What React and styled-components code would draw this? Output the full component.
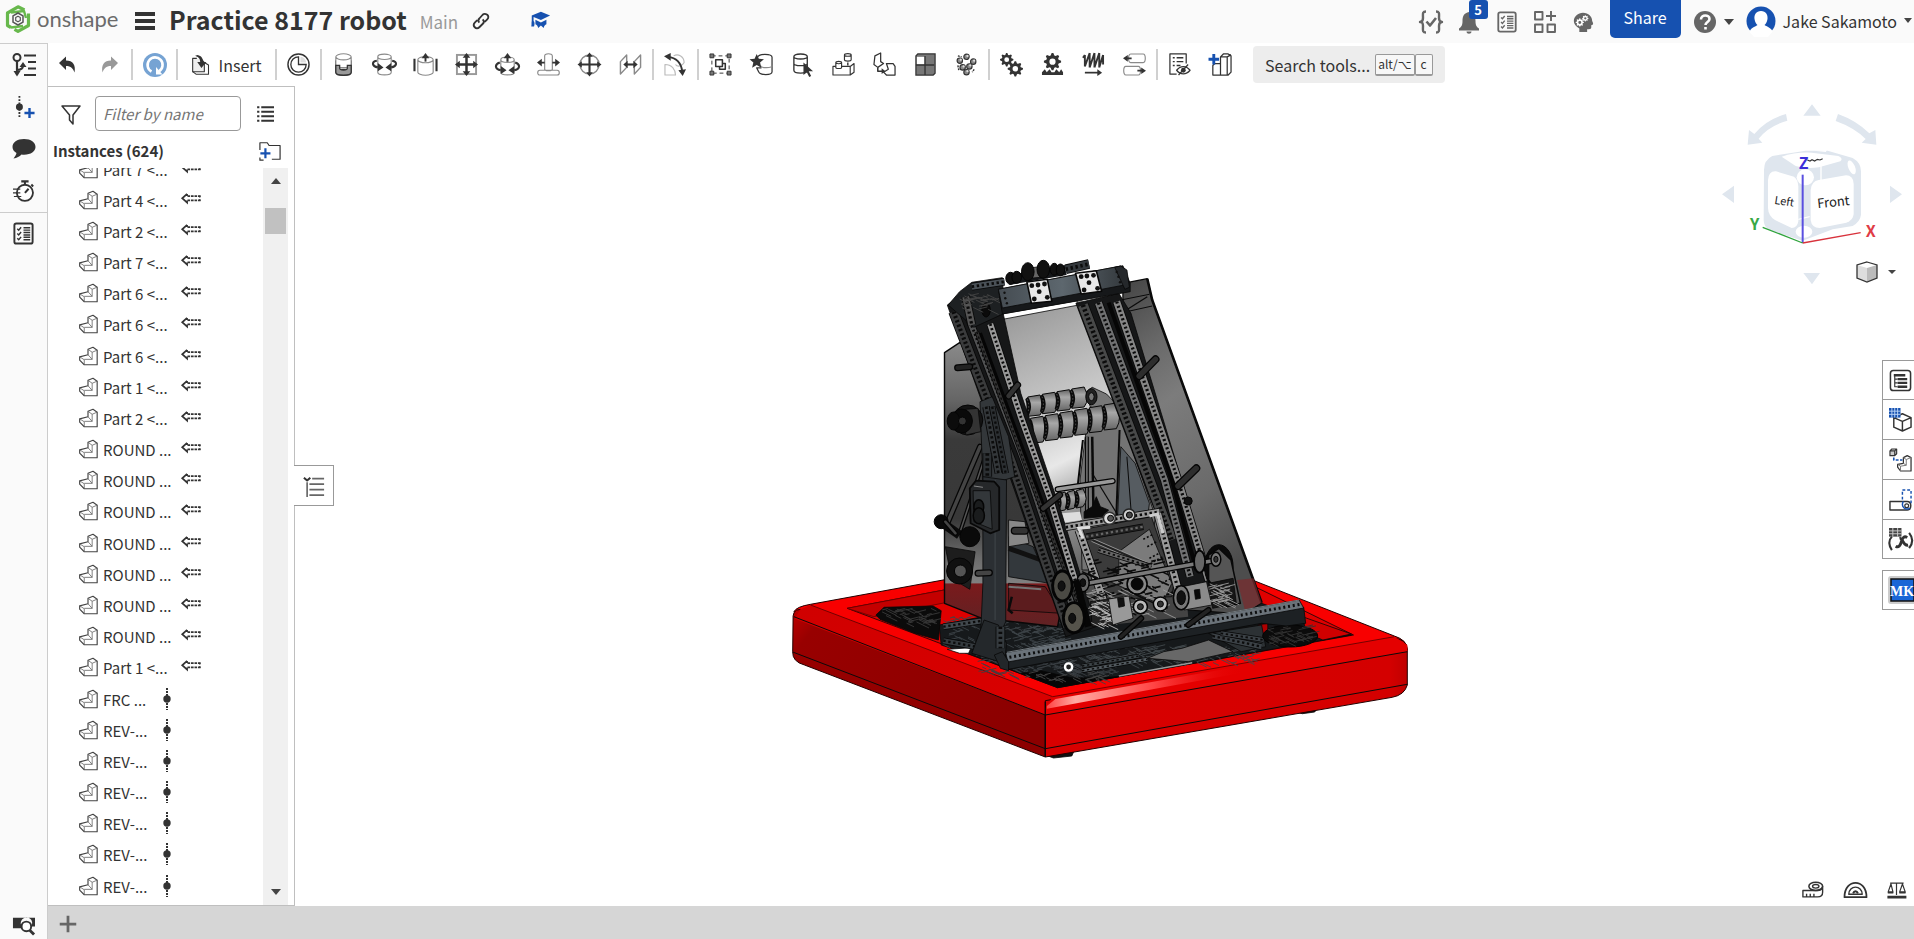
import React from 'react';
import styled, { createGlobalStyle } from 'styled-components';

const GlobalStyle = createGlobalStyle`
  * { box-sizing: border-box; }
  html, body, #root { height: 100%; }
  body {
    margin: 0;
    overflow: hidden;
    background: #fff;
    color: #333;
    font: 16px/24px "Noto Sans CJK SC", "Noto Sans", sans-serif;
  }
  button { border: 0; padding: 0; background: none; color: inherit; font: inherit; cursor: pointer; }
  h1, h2, ul { margin: 0; padding: 0; }
`;

/* ---------- icons ---------- */

const Svg = styled.svg`
  display: block;
  flex: none;
  width: ${p => p.$w || 24}px;
  height: ${p => p.$h || p.$w || 24}px;
  overflow: visible;
`;

const D = '#333';
const G = '#8a8a8a';
const B = '#1651b0';

const Line = ({ d, c = D, w = 1.5, f = 'none', ...rest }) => (
  <path d={d} stroke={c} strokeWidth={w} fill={f} strokeLinejoin="round" {...rest} />
);
const Fill = ({ d, c = D }) => <path d={d} fill={c} />;

const gear = (cx, cy, r, teeth = 8) => {
  let d = '';
  for (let i = 0; i < teeth * 4; i++) {
    const a = ((i - 0.5) / (teeth * 4)) * Math.PI * 2;
    const rr = i % 4 < 2 ? r : r * 0.74;
    d += `${i ? 'L' : 'M'}${(cx + Math.cos(a) * rr).toFixed(2)} ${(cy + Math.sin(a) * rr).toFixed(2)}`;
  }
  const h = r * 0.36;
  return `${d}ZM${cx - h} ${cy}a${h} ${h} 0 1 0 ${2 * h} 0a${h} ${h} 0 1 0 ${-2 * h} 0Z`;
};

const can = (x, y, w, h) =>
  `M${x} ${y}v${h}a${w / 2} ${w / 5} 0 0 0 ${w} 0v${-h}a${w / 2} ${w / 5} 0 0 0 ${-w} 0a${w / 2} ${w / 5} 0 0 0 ${w} 0`;

const ICONS = {
  undo: <Fill d="M2 10 9 3.5V7.500c7 0 10 4.500 8.500 12C16 15.500 14 13 9 13v4z" />,
  redo: <Fill c="#999" d="M20 10 13 3.500V7.500c-7 0-10 4.500-8.500 12C6 15.500 8 13 13 13v4z" />,
  refresh: <><circle cx="12" cy="12" r="12" fill="#76a3d3" /><Line c="#fff" w={2.600} d="M8.500 18.500A7.500 7.500 0 1 1 16 18.300" /><Fill c="#fff" d="M13 14v7.500h6.500z" /></>,
  insert: <><Line d="M7 4H2v16h14V9l-3-3.500" w={1.300} f="#eee" /><Line d="M2 20l4 3h15V12l-5-3" w={1.300} /><Fill d="M8 0c4.500 1 6.500 4 6.500 8.500H18.500l-6 7-5-7h3.500C11 5.500 10 3 5 1z" /></>,
  clock: <><circle cx="12" cy="12" r="11" fill="#fff" stroke={D} strokeWidth="1.500" /><path d="M12 4a8 8 0 1 0 8 8h-8z" fill="#fff" stroke={D} strokeWidth="1.400" /><path d="M14 4v6h6a7 7 0 0 0-6-6z" fill="#ddd" /></>,
  fastened: <><path d="M4 9v11c0 4.500 16 4.500 16 0V9l-3 3v5H7v-5z" fill="#999" stroke={D} strokeWidth="1.300" /><path d={can(4, 4, 16, 8)} fill="#fff" stroke={G} strokeWidth="1.200" /><path d="M4 13h4v3c0 2.500 8 2.500 8 0v-3h4v7c0 4-16 4-16 0z" fill="#999" stroke={D} strokeWidth="1.300" /></>,
  revolute: <><Line c={G} w={1.200} f="#fff" d={can(5, 4, 14, 16)} /><Line w={2.200} d="M4 8C-2 9-1 14 5 15M20 8c6 1 5 6-1 7" /><Fill d="M5 10.500 11 15l-6 4zM19 10.500 13 15l6 4z" /></>,
  slider: <><Line c={G} w={1.200} f="#fff" d={can(4, 7, 16, 13)} /><Line w={2.200} d="M.500 6v13M23.500 6v13" /><Line w={2} d="M12 9V4" /><Fill d="M8 5.500 12 0l4 5.500z" /></>,
  planar: <><rect x="2" y="2" width="20" height="20" fill="none" stroke="#999" strokeWidth="2" /><Line w={2.600} d="M12 4v16M4 12h16" /><Fill d="M8 5 12 0l4 5zM8 19l4 5 4-5zM5 8 0 12l5 4zM19 8l5 4-5 4z" /></>,
  cylindrical: <><Line c={G} w={1.200} f="#fff" d={can(5, 7, 14, 13)} /><Line w={2.200} d="M4 10C-2 12-1 17 5 18M20 10c6 2 5 7-1 8M12 9V4" /><Fill d="M5 13.500 11 18l-6 4zM19 13.500 13 18l6 4zM8 5.500 12 0l4 5.500z" /></>,
  pinslot: <><Line c={G} w={1.200} f="#fff" d="M3 18h18c3 0 3 5 0 5H3c-3 0-3-5 0-5zM8 3v14c0 2 8 2 8 0V3c0-3-8-3-8 0z" /><Line w={2} d="M16 10h4M8 10H4" /><Fill d="M19 6l5 4-5 4zM5 6l-5 4 5 4z" /></>,
  ball: <><circle cx="12" cy="12" r="10" fill="none" stroke={G} strokeWidth="1.500" /><Line w={2.200} d="M12 3v18M3 12h18" /><Fill d="M8.500 4 12-.500 15.500 4zM8.500 20l3.500 4.500 3.500-4.500zM4 8.500-.500 12 4 15.500zM20 8.500l4.500 3.500-4.500 3.500z" /></>,
  parallel: <><Line c={G} w={1.500} d="M1.500 9 8 2v13l-6.500 7zM16 9l6.500-7v13L16 22z" /><Line w={2.200} d="M7 12h9" /><Fill d="M9 8l-4.500 4L9 16zM15 8l4.500 4-4.500 4z" /></>,
  tangent: <><Line c="#bbb" w={1.200} d="M1 12c7 0 11 5 11 11H1zM10 3c5-3 11 1 11 7-2 4-7 5-9 2" /><Line w={2} d="M4 4c9 1 14 7 15 15" /><Fill d="M7 0 0 3.500 7 8zM15 18l4.500 6L23 17z" /></>,
  group: <><rect x="3" y="3" width="18" height="18" fill="none" stroke={D} strokeDasharray="4 3" /><path d="M1 1h4v4H1zM19 1h4v4h-4zM1 19h4v4H1zM19 19h4v4h-4z" fill="#777" stroke={D} /><Line d="M7 7h7v7H7zM14 11h3v6h-6v-3" w={1.600} /></>,
  replicate: <><Line c={D} w={1.300} f="#fff" d="M8 4.500c0-4 15-4 15 0v15c0 4-13 4-14 0l-2-4h5" /><Line c={G} w={1.200} d="M11 13c0 3 12 3 12 0" /><Fill d="M7 1l2.200 5 5.300.500-4 3.500 1.300 5.500L7 12.500 2.200 15.500l1.300-5.500-4-3.500 5.300-.500z" /></>,
  select: <><Line w={1.400} f="#fff" d="M3 4c0-4 14-4 14 0v14c0 4-14 4-14 0zM3 4c0 3 14 3 14 0M3 11c0 3 14 3 14 0" /><Fill d="M13 10v13l3.500-3 2.500 5 2-1-2.500-5H23z" /></>,
  pattern: <><Line w={1.200} f="#fff" d="M1 14h18l4-3v9l-4 3H1zM19 14v9" /><Line w={1.200} f="#fff" d={can(4, 10, 6, 5)} /><Line w={1.200} f="#fff" d={can(13, 2, 7, 5)} /><Line d="M16.500 10v3" w={1.500} /></>,
  mirror: <><Line w={1.300} f="#fff" d="M2 3l6-3v9l3 2-6 4-4-3zM14 11l7 0 2 3v9h-9l-3-3 5-3z" /><Line w={1.600} d="M5 15v4h5" /><Fill d="M9 16l4 3-4 3z" /></>,
  block: <><path d="M2 3l2-2h18v20l-2 2H2z" fill="#777" stroke={D} strokeWidth="1.300" /><path d="M3 4h8v8H3z" fill="#fff" /><Line d="M11.500 3v20M2 12.500h19" w={1.400} /></>,
  circular: <>{[[12, 4], [5, 8], [19, 9], [8, 15], [15, 14], [12, 20]].map(([x, y]) => <g key={x + y * 30}><circle cx={x} cy={y} r="2.800" fill="#888" stroke={D} strokeWidth="1.200" /><circle cx={x + 1} cy={y - 1} r="1.200" fill="#ddd" /></g>)}<Line d="M3 3l4 1M20 17l-2 3M3 13l1 5" strokeDasharray="2 1" /></>,
  gearpair: <><path d={gear(7, 7, 7)} fill={D} fillRule="evenodd" /><path d={gear(16, 16.500, 8)} fill={D} fillRule="evenodd" /></>,
  rack: <><path d={gear(12, 9, 9)} fill={D} fillRule="evenodd" /><Fill d="M1 23v-3l3-3 2 3 3-3 2 3h3l2-3 3 3 2-3 2 3v3z" /></>,
  screw: <><Line w={2} d="M3 2v12M8 0v15M13 0v15M18 0v15M22 2v10M1 5l2-3M3 14l5-14M8 15l5-15M13 15l5-15M18 15l4-13" /><Line w={1.800} d="M3 20.500h14" /><Fill d="M16 17l5 3.500-5 3.500z" /></>,
  linear: <><Line c={G} w={1.200} f="#fff" d="M8 1h13c3 0 3 9 0 9H8c-3 0-3-9 0-9zM3 14h13c3 0 3 9 0 9H3c-3 0-3-9 0-9z" /><Line w={1.800} d="M4 5.500h5M15 18.500h5" /><Fill d="M5 2 0 5.500 5 9zM19 15l5 3.500-5 3.500z" /></>,
  bom: <><Line w={1.300} d="M19 11V1H2v21h7" /><Line w={1.500} d="M5 5h2M9 5h7M5 9h2M9 9h7M5 13h2M9 13h4" /><Line w={1.300} f="#fff" d="M9 18c4-5 10-5 14 0-4 5-10 5-14 0z" /><circle cx="16" cy="18" r="2.500" fill={D} /><Line w={1.300} d="M11 23l10-11" /></>,
  variable: <><Line w={1.300} f="#fff" d="M12 4l3-3h5l3 2v17l-3 3h-8zM12 4h7l4-2M19 4v19M4 13l2-2h6v12H4z" /><Line c={B} w={3} d="M5 1v11M-.500 6.500h11" /></>,
  tree: <><circle cx="5" cy="4.500" r="3.500" fill="none" stroke={D} strokeWidth="2" /><Line w={2.200} d="M5 8v14M5 17c5 0 6-2 6-5" /><Fill d="M1.500 18h7L5 23.500zM7.500 14l3.500-5 3.500 5z" /><Line w={2.200} d="M12 2.500h12M16 9h8M16 15.500h8M12 22h12" /></>,
  addmate: <><Line d="M7 0v24" w={2} strokeDasharray="2 1.500" /><circle cx="7" cy="12" r="3.800" fill={D} /><Line c={B} w={2.600} d="M18 13v11M12.500 18.500h11" /></>,
  comment: <Fill d="M12 2C5 2 .500 5.500.500 10c0 2.500 1.500 4.500 4 6-.500 2-1.500 3.500-3 5.500 3.500-.500 6-2 8-4 8 1 14-2.500 14-7.500C23.500 5.500 19 2 12 2z" />,
  timer: <><circle cx="13" cy="14" r="8.800" fill="#fff" stroke={D} strokeWidth="2" /><Line w={2.200} d="M9 1.500h8M13 2v3M20 5l2 2M13 14l4-4.500" /><path d="M0 10h8M0 14h8M1 18h8" stroke={D} strokeWidth="1.300" /></>,
  checklist: <><rect x="2.500" y="1.500" width="19" height="21" rx="2" fill="none" stroke="currentColor" strokeWidth="2" /><g fill="none" stroke="currentColor" strokeWidth="1.500"><path d="M5.500 7l1.500 1.500L9.500 5.500M5.500 12l1.500 1.500 2.500-3M5.500 17l1.500 1.500 2.500-3M12 6h7M12 8.500h7M12 11h7M12 13.500h7M12 16h7M12 18.500h7" /></g></>,
  search: <><path d="M1 5h23v9h-4a6 6 0 1 0-9 1l-1 1H1z" fill={D} /><circle cx="15" cy="14" r="5" fill="#fff" stroke={D} strokeWidth="2" /><Line w={3} d="M18.500 18l4.500 4.500" /></>,
  funnel: <Line w={1.500} d="M3 4h18L14 13v9l-3.500-4v-5z" />,
  list: <><Line w={2.600} d="M7 3h17M7 9h17M7 15h17M7 21h17" /><Line w={2.600} d="M1.500 3h3M1.500 9h3M1.500 15h3M1.500 21h3" /></>,
  folder: <><Line w={1.300} d="M1 11V3h8l2 3h12v15h-9M1 19v3h4" /><Line c={B} w={2.400} d="M7 9v11M1.500 14.500h11" /></>,
  add: <Line c="#666" w={3} d="M12 3v18M3 12h18" />,
  outline: <><Line w={2.200} d="M1 3l3.500 3L8 3" /><Line c="#666" w={1.800} d="M10 4h13M7 10h16M7 16h16M7 22h16M4.500 8v16" /></>,
  link: <Line w={2.200} d="M10 14c-2-2-1-4 0-5l4-4.500c2-2 4-1 5.500 0 1.500 1.500 2 3.500 0 5.500l-3 3M14 10c2 2 1.500 4 .500 5L10 19.500c-2 2-4 1.500-5.500 0-1.500-1.500-2-3.500 0-5.500l3-3" />,
  cap: <Fill c={B} d="M13 2l10 4-10 5L5 7.500V12c1 1 1.500 3 .500 6H2.500C3 15 2.500 13.500 3 12V6zM7 10.500l6 3 6-3v5c-1.500.500-2.500 1.500-3 4L13 17l-3 2.500c-.500-2.500-1.500-3.500-3-4z" />,
  braces: <><Line c="#666" w={2.400} d="M7 1.500C3 1.500 4 4 4 8c0 3-1 4-3 4 2 0 3 1 3 4 0 4-1 6.500 3 6.500M17 1.500c4 0 3 2.500 3 6.500 0 3 1 4 3 4-2 0-3 1-3 4 0 4 1 6.500-3 6.500" /><Line c="#666" w={2.600} d="M7.500 11.500l3.500 4L17 8" /></>,
  bell: <Fill c="#666" d="M12 2c-5 1-6.500 4-6.500 9S4 17 2 18.500v2h20v-2c-2-1.500-3.500-2.500-3.500-7.500S17 3 12 2zM9.500 21.500h5c0 3-5 3-5 0z" />,
  apps: <Line c="#666" w={1.900} d="M2 2h7.500v7.500H2zM2 14.500h7.500V22H2zM14.500 14.500H22V22h-7.500zM18 1v10M13 6h10" />,
  head: <><Fill c="#666" d="M12 2c6 0 10 4 10 9 1 2 1.500 3 .500 4l-1.500.500V18c0 2-2 2-4.500 2v3H8v-4c-4-2-6-5-6-8 0-5 4.500-9 10-9z" /><path d={gear(8.500, 12.500, 4.500)} fill="#fff" fillRule="evenodd" /><path d={gear(14.500, 8, 3.500)} fill="#fff" fillRule="evenodd" /></>,
  help: <><circle cx="12" cy="12" r="11" fill="#666" /><path d="M8 9.500c0-5.500 8.500-5 8.500-.500 0 3-4 3-4 6M12.500 17v2.500" fill="none" stroke="#fff" strokeWidth="2.600" /></>,
  props: <><rect x="1.500" y="1.500" width="21" height="21" rx="3" fill="#fff" stroke={D} strokeWidth="1.600" /><Line w={2.400} d="M5 6.500h12M9 10.500h10M9 14.500h10M9 18.500h10" /><Line w={1.200} d="M6 6v12.500h3M6 10.500h3M6 14.500h3" /></>,
  configs: <><Line w={1.500} f="#fff" d="M5 10l9-4 9 4v10l-9 4-9-4zM5 10l9 4 9-4M14 14v10" /><rect x="0" y="0" width="12" height="10" fill={B} /><path d="M0 3.300h12M0 6.600h12M3 0v10M6 0v10M9 0v10" stroke="#bcd4f5" /></>,
  derived: <><Line w={1.200} f="#ccc" d="M1 3l2-2h5v5l-2 2H1zM1 3h5l2-2M6 3v5" /><Line w={1.300} f="#fff" d="M15 10l4-2 4 2v14H12l-3-4v-3l6-1z" /><Line w={1} c="#777" d="M15 10l3 2 5-2M18 12v6l-6 1v5M9 17l3 2M15 16l3 2" /><Line c={B} w={1.700} d="M5 10v2.500h9" strokeDasharray="3 1.500" /></>,
  named: <><Line w={1.500} f="#fff" d="M1 14h18c5 0 5 9 0 9H1z" /><circle cx="18.500" cy="18.500" r="2" fill="none" stroke={D} strokeWidth="1.300" /><Line c={B} w={1.500} d="M14 12V2h9v14" strokeDasharray="3 2" /><Line c={B} w={1.500} d="M15 14c-3 5 2 10 7 7" /></>,
  vars: <><Line w={2.200} d="M3 9c-4 4-3 10 0 14M21 5c4 5 4 11 0 16" /><Line w={3} d="M7 19c3 2 5-1 6-5s3-6 6-4M11 11c4-1 3 8 9 7" /><rect x="0" y="0" width="13" height="9" fill="#444" /><path d="M0 3h13M0 6h13M4 0v9M9 0v9" stroke="#ccc" /></>,
  tape: <><ellipse cx="15" cy="8" rx="7.500" ry="4.500" fill="#fff" stroke={D} strokeWidth="1.700" /><ellipse cx="15" cy="8" rx="3.500" ry="2" fill="none" stroke={D} strokeWidth="1.500" /><Line w={1.500} d="M1 12.500h16c3 0 5-2 5.500-4v6c0 3-2 5-5.500 5H1zM5 20v-4M9 20v-4M13 20v-4" /></>,
  protractor: <><Line w={1.800} d="M.500 20C.500 0 23.500 0 23.500 20z" /><Line w={1.500} d="M5 17c0-10 14-10 14 0z" /><Line w={2} d="M9.500 16c1-3 4-3 5 0" /></>,
  scales: <><Line w={1.500} d="M4 4h17M12 4v15M5 5L1.500 15h6zM19.500 5L16 15h7z" /><Fill d="M1 15h7v2H1zM15.500 15h8v2h-8zM.500 20h24v3.500H.500z" /></>,
  part: <><Line c="#444" w={1.400} f="#fff" d="M12 4l6-2.500L23 5v17.500H7.500L2 17v-4l10-2.500z" /><Line c="#666" w={1} d="M12 4l5 3.500L23 5M17 7.500v8.500H7.500M2 13l5.500 3.500v6M12 10.500l5 5.500" /></>,
};

const Icon = ({ name, size = 24 }) => (
  <Svg $w={size} viewBox="0 0 24 24" aria-hidden="true">{ICONS[name]}</Svg>
);

/* ---------- frame ---------- */

const Page = styled.div`
  display: grid;
  grid-template: 43px minmax(0, 1fr) / 48px minmax(0, 1fr);
  height: 100vh;
`;

const Header = styled.header`
  grid-column: 1 / -1;
  display: flex;
  align-items: center;
  padding: 0 2px 5px 5px;
  background: #fafafa;
  overflow: hidden;
`;

const Wordmark = styled.span`
  margin-left: 6px;
  width: 98px;
  color: #6b6b6b;
  font: 22px/28px Lato, sans-serif;
`;

const MenuButton = styled.button`
  display: grid;
  gap: 3px;
  width: 20px;
  margin: 3px 14px 0 0;
  span { height: 4px; background: #333; }
`;

const Title = styled.h1`
  font-size: 25px;
  line-height: 36px;
  font-weight: 700;
  white-space: nowrap;
`;

const Branch = styled.span`
  margin: 6px 13px 0;
  color: #999;
  font-size: 17px;
`;

const HeaderLink = styled.button`
  margin: 4px ${p => p.$after || 0}px 0 0;
`;

const Account = styled.div`
  display: flex;
  align-items: center;
  margin-left: auto;
`;

const HeaderTool = styled.button`
  position: relative;
  display: flex;
  justify-content: center;
  width: 38px;
  padding-top: 6px;
  color: #666;
`;

const Badge = styled.span`
  position: absolute;
  top: -4px;
  left: 19px;
  width: 19px;
  height: 19px;
  border-radius: 3px;
  background: #1651b0;
  color: #fff;
  font-size: 13px;
  line-height: 19px;
  font-weight: 700;
`;

const ShareButton = styled.button`
  align-self: flex-start;
  width: 71px;
  height: 38px;
  margin: 0 12px 0 8px;
  padding-bottom: 4px;
  border-radius: 0 0 5px 5px;
  background: #1651b0;
  color: #fff;
`;

const MenuTrigger = styled.button`
  display: flex;
  align-items: center;
  gap: 7px;
  margin-right: 12px;
  padding-top: 6px;
  white-space: nowrap;
  &:last-child { margin-right: 0; padding-top: 3px; }
`;

const Rail = styled.nav`
  display: flex;
  flex-direction: column;
  border: solid #ccc;
  border-width: 1px 1px 0 0;
  background: #fafafa;
`;

const RailButton = styled.button`
  display: flex;
  align-items: center;
  justify-content: center;
  flex: none;
  height: ${p => (p.$bottom ? 30 : 42)}px;
  margin-top: ${p => (p.$bottom ? 'auto' : '0')};
  border-top: ${p => (p.$divided ? '1px solid #ccc' : '0')};
`;

const Workspace = styled.div`
  display: grid;
  grid-template: 43px minmax(0, 1fr) 33px / 247px minmax(0, 1fr);
`;

const Toolbar = styled.div`
  grid-column: 1 / -1;
  display: flex;
  align-items: center;
`;

const Tool = styled.button`
  display: flex;
  align-items: center;
  justify-content: center;
  gap: 7px;
  flex: none;
  width: ${p => p.$wide || 41}px;
  height: 36px;
`;

const Divider = styled.span`
  flex: none;
  width: 2px;
  height: 31px;
  margin: 0 1px;
  background: #d0d0d0;
`;

const SearchTools = styled.button`
  display: flex;
  align-items: center;
  height: 37px;
  margin-left: 12px;
  padding: 0 12px;
  border-radius: 4px;
  background: #ededed;
  white-space: nowrap;
`;

const Key = styled.kbd`
  height: 22px;
  padding: 0 ${p => p.$pad || 2}px;
  border: 1px solid #999;
  border-bottom-width: 2px;
  border-radius: 2px;
  background: #f7f7f7;
  font: 12px/18px "Noto Sans CJK SC", "DejaVu Sans", sans-serif;
  margin-left: ${p => p.$gap || 0}px;
`;

/* ---------- instance panel ---------- */

const Panel = styled.aside`
  display: flex;
  flex-direction: column;
  min-height: 0;
  border: 1px solid #bfbfbf;
  border-left: 0;
`;

const FilterRow = styled.div`
  display: flex;
  align-items: center;
  gap: 12px;
  padding: 9px 0 0 11px;
`;

const FilterInput = styled.input`
  width: 146px;
  height: 35px;
  margin-right: 3px;
  padding: 0 7px;
  border: 1px solid #999;
  border-radius: 4px;
  background: #fff;
  color: #333;
  font: 15px/22px "Noto Sans CJK SC", sans-serif;
  &::placeholder { color: #757575; font-style: italic; opacity: 1; }
`;

const SectionHead = styled.div`
  display: flex;
  align-items: center;
  justify-content: space-between;
  height: 37px;
  padding: 2px 13px 0 5px;
`;

const SectionTitle = styled.h2`
  font-size: 15px;
  line-height: 22px;
  font-weight: 700;
`;

const ListArea = styled.div`
  display: flex;
  flex: 1;
  min-height: 0;
  padding-right: 6px;
  overflow: hidden;
`;

const List = styled.ul`
  display: flex;
  flex-direction: column;
  flex: 1;
  margin-top: -15px;
  padding-bottom: 4px;
  list-style: none;
`;

const Row = styled.li`
  display: flex;
  flex: 1 0 28px;
  align-items: center;
  padding-left: 30px;
  font-size: 15px;
  line-height: 22px;
  white-space: nowrap;
`;

const RowName = styled.span`
  width: ${p => (p.$short ? 60 : 77)}px;
  margin-left: 5px;
  padding-top: 2px;
`;

const Scrollbar = styled.div`
  display: flex;
  flex-direction: column;
  align-items: center;
  width: 25px;
  padding: 10px 0;
  background: #f0f0f0;
`;

const Thumb = styled.div`
  width: 21px;
  height: 26px;
  margin: 24px 0 auto;
  background: #c1c1c1;
`;

const TabBar = styled.footer`
  grid-column: 1 / -1;
  display: flex;
  align-items: center;
  padding: 2px 0 0 9px;
  background: #d6d6d6;
`;

/* ---------- canvas ---------- */

const Canvas = styled.main`
  position: relative;
  display: flex;
  align-items: center;
  justify-content: center;
  min-width: 0;
  min-height: 0;
  padding: 28px 9px 0 0;
`;

const PanelToggle = styled.button`
  position: absolute;
  left: -1px;
  top: 379px;
  display: flex;
  align-items: center;
  justify-content: center;
  width: 40px;
  height: 41px;
  border: 1px solid #999;
  border-left: 0;
  background: #fff;
`;

const CubeArea = styled.div`
  position: absolute;
  top: 4px;
  right: 0;
`;

const ShadeButton = styled.button`
  position: absolute;
  top: 171px;
  right: 18px;
  display: flex;
  align-items: center;
  gap: 10px;
`;

const SideTabs = styled.div`
  position: absolute;
  top: 274px;
  right: 0;
  display: grid;
  gap: 11px;
`;

const SideGroup = styled.div`
  border: solid #999;
  border-width: 0 0 1px 1px;
  background: #fff;
`;

const SideButton = styled.button`
  display: flex;
  align-items: center;
  width: 31px;
  height: ${p => p.$tall ? 40 : 39}px;
  padding-left: 6px;
  border-top: 1px solid #999;
`;

const MeasureBar = styled.div`
  position: absolute;
  right: 8px;
  bottom: 5px;
  display: flex;
  gap: 20px;
`;

const Caret = ({ up, w = 10, h = 6 }) => (
  <Svg $w={w} $h={h} viewBox="0 0 10 6" preserveAspectRatio="none" aria-hidden="true">
    <path d={up ? 'M0 6 5 0l5 6z' : 'M0 0h10L5 6z'} fill="#444" />
  </Svg>
);

const Logo = () => (
  <Svg $w={26} $h={28} viewBox="0 0 26 28" role="img" aria-label="Onshape">
    <g fill="none" strokeLinejoin="round">
      <path d="M19.500 5 13 1.800 2.500 8v12.500l3.500 2" stroke="#67b84c" strokeWidth="3.200" />
      <path d="M23.500 8.500v12L13 26.300l-3.500-2" stroke="#67b84c" strokeWidth="3.200" />
      <path d="M6 7.500l13-1.500 2 7M6 22.500l12-1.500" stroke="#67b84c" strokeWidth="2.400" />
      <path d="M13 8 8 10.800v6.400l5 2.800 5-2.800v-6.400z" stroke="#555" strokeWidth="1.500" />
      <path d="M13 11.200l-2.300 1.300v3L13 16.800l2.300-1.300v-3z" stroke="#555" strokeWidth="1.200" />
    </g>
  </Svg>
);

const Avatar = () => (
  <Svg $w={30} viewBox="0 0 30 30" aria-hidden="true">
    <circle cx="15" cy="15" r="14.500" fill="#1651b0" />
    <path d="M15 5c5 0 7 4 6.500 8-.500 3.500-2 5-3 6 3 2 7 3 8 6.500L22 31H8l-4.500-5c1-4 5-5 8-7-1-1-2.500-2.500-3-6C8 9 10 5 15 5z" fill="#fff" />
  </Svg>
);

const MateArrow = () => (
  <Svg $w={22} $h={14} viewBox="0 0 22 16" aria-hidden="true">
    <path d="M6.500 1 1 6l5.500 5V8.500M6.500 1V3.500" fill="none" stroke="#333" strokeWidth="2" />
    <path d="M7 3.500h15M7 8.500h15" stroke="#333" strokeWidth="2" strokeDasharray="3 1" />
    <path d="M21 3v6" stroke="#333" strokeWidth="1.500" strokeDasharray="2 2" />
  </Svg>
);

const MateDot = () => (
  <Svg $w={8} $h={22} viewBox="0 0 8 22" aria-hidden="true">
    <path d="M4 0v22" stroke="#333" strokeWidth="2" strokeDasharray="2 1" />
    <circle cx="4" cy="11" r="3.700" fill="#333" />
  </Svg>
);

const ViewCube = () => (
  <Svg $w={214} $h={210} viewBox="0 0 642 630" role="img" aria-label="View cube" fontFamily='"Noto Sans CJK SC", sans-serif'>
    <g fill="#dfe6ee">
      <path d="M310 77 336 43l26 34zM310 549h50l-24 34zM66 313l36-26v52zM606 313l-36-26v52z" />
      <path d="M258 72q-60 16-95 60l-16-12-4 44 44-6-11-12q30-38 86-54zM414 72q56 20 94 58l18-10 3 44-44-6 12-11q-34-34-90-54z" />
      <path d="M192 240q0-30 25-42l100-16h66l75 22q25 14 25 40v130q-2 20-25 34l-60 10-90 34-100-32q-17-10-17-30z" />
    </g>
    <g fill="#fff">
      <path d="M245 200q40-14 90-12l80 10q16 8 6 16l-64 18q-40 6-70-4z" />
      <path d="M204 270q2-28 24-26l54 16q12 8 13 30v104q-3 20-20 20l-50-24q-20-12-21-36z" />
      <path d="M332 300q2-26 24-30l82-14q22 0 23 26v90q-2 20-22 26l-80 16q-24 0-27-24z" />
      <ellipse cx="316" cy="262" rx="26" ry="24" />
      <ellipse cx="312" cy="425" rx="25" ry="18" />
      <ellipse cx="455" cy="232" rx="10" ry="22" transform="rotate(-22 455 232)" />
      <path d="M361 228h4v42h-4zM295 386l34-8v4l-34 8zM342 182l38-2-2 6z" />
    </g>
    <g fill="#222">
      <text x="222" y="341" fontSize="33" transform="rotate(9 222 341)">Left</text>
      <text x="353" y="355" fontSize="39" transform="rotate(-6 353 355)">Front</text>
    </g>
    <path d="M322 210l8 3 6-4 8 4 8-5 8 2 8-4" fill="none" stroke="#333" strokeWidth="3.500" />
    <path d="M308 459V254" stroke="#5a50e0" strokeWidth="6" />
    <path d="M308 459 482 428" stroke="#d8323c" strokeWidth="4" />
    <path d="M308 459 188 412" stroke="#2fa33c" strokeWidth="4" />
    <g fontSize="48" fontWeight="700">
      <text x="296" y="238" fill="#3a2fd8">Z</text>
      <text x="150" y="420" fill="#39a845">Y</text>
      <text x="497" y="440" fill="#e03c46">X</text>
    </g>
  </Svg>
);

/* ---------- robot model ---------- */

const sx = x => +(x / 2.45).toFixed(1);
const sy = y => +(y / 3).toFixed(1);
const pts = s => s.split(' ').map(p => { const [x, y] = p.split(','); return `${sx(x)},${sy(y)}`; }).join(' ');

const Poly = ({ p, f = 'none', s = '#080808', w = 0.8, ...r }) => <polygon points={pts(p)} fill={f} stroke={s} strokeWidth={w} strokeLinejoin="round" {...r} />;
const Seg = ({ p, s = '#0a0a0a', w = 1, ...r }) => <polyline points={pts(p)} fill="none" stroke={s} strokeWidth={w} {...r} />;
const Disc = ({ x, y, r, f = '#111', s = '#050505', w = 1, k = 1 }) => <ellipse cx={sx(x)} cy={sy(y)} rx={r * k} ry={r} fill={f} stroke={s} strokeWidth={w} />;
const Rod = ({ p, w = 6, c = '#333' }) => <><Seg p={p} w={w} s="#050505" strokeLinecap="round" /><Seg p={p} w={w - 2.5} s={c} strokeLinecap="round" /></>;

/* A punched channel: a solid strip with a row of holes down its middle. */
const Channel = ({ p, w = 7, c = '#5a5a5a', hole = '#0b0b0b', d = '2.4 2.6' }) => (
  <>
    <Seg p={p} w={w + 1.6} s="#070707" />
    <Seg p={p} w={w} s={c} />
    <Seg p={p} w={w * 0.46} s={hole} strokeDasharray={d} />
  </>
);

const Roller = ({ x, y, h, w }) => {
  const X = n => sx(x + n), Y = n => sy(y + n);
  const b = Math.round(h * 0.12);
  return (
    <>
      <path d={`M${X(4)} ${Y(0)}L${X(w + 4)} ${Y(-6)}Q${X(w + 20)} ${Y(h / 2)} ${X(w + 4)} ${Y(h - 4)}L${X(4)} ${Y(h)}z`} fill="url(#roller)" stroke="#0a0a0a" strokeWidth="1" />
      <path d={`M${X(-2)} ${Y(b)}Q${X(4)} ${Y(-4)} ${X(8)} ${Y(b)}Q${X(16)} ${Y(h / 2)} ${X(8)} ${Y(h - b)}Q${X(4)} ${Y(h + 4)} ${X(-2)} ${Y(h - b)}Q${X(4)} ${Y(h / 2)} ${X(-2)} ${Y(b)}z`} fill="#0b0b0b" />
      <path d={`M${X(3)} ${Y(b)}Q${X(10)} ${Y(h / 2)} ${X(3)} ${Y(h - b)}`} fill="none" stroke="#555" strokeWidth="1" strokeDasharray="1.500 2" />
    </>
  );
};

const scatter = (n, x0, y0, w, h, seed) => {
  let s = seed;
  const rnd = () => { s = (s * 16807) % 2147483647; return s / 2147483647; };
  return Array.from({ length: n }, () => {
    const x = x0 + rnd() * w, y = y0 + rnd() * h, l = 10 + rnd() * 22, a = rnd() > 0.5 ? -0.3 : 0.6;
    return `M${sx(x)} ${sy(y)}L${sx(x + l)} ${sy(y + l * a)}`;
  }).join('');
};

const Clutter = ({ a, c = '#555', w = 0.9 }) => <path d={scatter(...a)} stroke={c} strokeWidth={w} fill="none" />;

const Robot = () => (
  <Svg $w={640} $h={520} viewBox="0 0 640 520" role="img" aria-label="Robot assembly">
    <defs>
      <linearGradient id="backPlate" x1="0" y1="0" x2="0.300" y2="1"><stop offset="0" stopColor="#8f8f8f" /><stop offset="0.250" stopColor="#b4b4b4" /><stop offset="0.450" stopColor="#d0d0d0" /><stop offset="0.560" stopColor="#e8e8e8" /><stop offset="0.700" stopColor="#999" /><stop offset="1" stopColor="#444" /></linearGradient>
      <linearGradient id="rightPlate" x1="0" y1="0" x2="0.300" y2="1"><stop offset="0" stopColor="#444" /><stop offset="0.250" stopColor="#6a6a6a" /><stop offset="0.420" stopColor="#7c7c7c" /><stop offset="0.750" stopColor="#6a6a6a" /><stop offset="1" stopColor="#4d4d4d" /></linearGradient>
      <linearGradient id="leftPlate" x1="0" y1="0" x2="0" y2="1"><stop offset="0" stopColor="#8a8a8a" /><stop offset="0.200" stopColor="#666" /><stop offset="0.340" stopColor="#3a3a3a" /><stop offset="0.620" stopColor="#383838" /><stop offset="0.760" stopColor="#6c6c6c" /><stop offset="0.845" stopColor="#808080" /><stop offset="0.850" stopColor="#7a1a1c" /><stop offset="1" stopColor="#5f2224" /></linearGradient>
      <linearGradient id="leftSide" x1="0" y1="0" x2="1" y2="0.500"><stop offset="0" stopColor="#c00000" /><stop offset="0.120" stopColor="#980000" /><stop offset="1" stopColor="#8c0000" /></linearGradient>
      <linearGradient id="leftBevel" x1="0" y1="0" x2="1" y2="0.400"><stop offset="0" stopColor="#d00000" /><stop offset="1" stopColor="#d80000" /></linearGradient>
      <linearGradient id="frontSide" x1="0" y1="0" x2="1" y2="0"><stop offset="0" stopColor="#d80000" /><stop offset="0.950" stopColor="#d40000" /><stop offset="1" stopColor="#c00000" /></linearGradient>
      <linearGradient id="shine" x1="0" y1="0" x2="1" y2="0"><stop offset="0" stopColor="#f44" /><stop offset="0.080" stopColor="#ffaaa2" /><stop offset="0.300" stopColor="#f44" /><stop offset="0.550" stopColor="#e80000" stopOpacity="0" /></linearGradient>
      <linearGradient id="roller" x1="0" y1="0" x2="0" y2="1"><stop offset="0" stopColor="#666" /><stop offset="0.350" stopColor="#a8a8a8" /><stop offset="1" stopColor="#666" /></linearGradient>
      <linearGradient id="beam" x1="0" y1="0" x2="1" y2="0"><stop offset="0" stopColor="#454c52" /><stop offset="0.500" stopColor="#5d676e" /><stop offset="1" stopColor="#33383c" /></linearGradient>
    </defs>

    {/* bumper */}
    <Poly p="650,1515 720,1504 715,1518 670,1524" f="#111" />
    <Poly p="1270,1388 1315,1378 1310,1386 1280,1391" f="#111" />
    <path d={`M${sx(34)} ${sy(1085)}Q${sx(40)} ${sy(1070)} ${sx(75)} ${sy(1063)}L${sx(480)} ${sy(972)} ${sx(1120)} ${sy(972)} ${sx(1505)} ${sy(1158)}Q${sx(1537)} ${sy(1170)} ${sx(1537)} ${sy(1200)}L${sx(650)} ${sy(1400)}z`} fill="#f80000" stroke="#200" strokeWidth="1" />
    <path d={`M${sx(32)} ${sy(1098)}Q${sx(34)} ${sy(1072)} ${sx(62)} ${sy(1080)}L${sx(650)} ${sy(1352)} ${sx(650)} ${sy(1521)} ${sx(60)} ${sy(1245)}Q${sx(30)} ${sy(1235)} ${sx(31)} ${sy(1205)}z`} fill="url(#leftSide)" stroke="#200" strokeWidth="1" />
    <Poly p="50,1078 75,1065 668,1340 650,1395 36,1106" f="url(#leftBevel)" s="none" />
    <Seg p="34,1100 650,1395" /><Seg p="31,1206 650,1496" />
    <path d={`M${sx(650)} ${sy(1352)}L${sx(1500)} ${sy(1165)}Q${sx(1537)} ${sy(1165)} ${sx(1537)} ${sy(1200)}L${sx(1537)} ${sy(1305)}Q${sx(1530)} ${sy(1335)} ${sx(1500)} ${sy(1342)}L${sx(650)} ${sy(1521)}z`} fill="url(#frontSide)" stroke="#200" strokeWidth="1" />
    <Poly p="650,1375 668,1340 1505,1160 1537,1185 1537,1205 650,1395" f="#e40000" s="none" />
    <Poly p="654,1368 675,1347 1505,1167 1530,1178 654,1376" f="url(#shine)" s="none" />
    <Seg p="650,1395 1537,1205" /><Seg p="650,1496 1537,1303" /><Seg p="650,1355 650,1521" w={1.200} />
    <Seg p="75,1065 668,1340 1505,1160" s="#500" w={0.800} />
    <Poly p="165,1075 480,1002 1150,1002 1405,1155 680,1313" f="#e00000" />
    <Poly p="165,1075 480,1002 480,1040 230,1100" f="#c40000" s="#600" />

    {/* chassis inside the bumper */}
    <Poly p="390,1125 560,1085 900,1060 1180,1060 1290,1110 1400,1155 680,1313 470,1215 395,1185" f="#16191b" />
    <Poly p="1280,1100 1400,1152 1330,1170 1290,1150" f="#d00000" />
    <Poly p="1170,1125 1195,1120 1195,1165 1172,1170" f="#b00000" />
    <Clutter a={[150, 400, 1100, 300, 90, 7]} c="#3d4448" />
    <Clutter a={[150, 480, 1215, 330, 60, 23]} c="#3a4044" />
    <Clutter a={[160, 700, 1190, 460, 50, 91]} c="#42484c" />
    <Poly p="410,1198 468,1193 462,1210 440,1210" f="#fff" />
    <Poly p="985,1195 1050,1170 1110,1205 1000,1235 900,1225 940,1205" f="#686868" />
    <Channel p="400,1130 560,1100" w={5} c="#41484d" /><Channel p="400,1172 500,1195" w={5} c="#343a3e" />
    <Poly p="1050,1150 1180,1125 1190,1190 1130,1205" f="#2c3134" /><Channel p="1060,1158 1180,1190" w={5} c="#3b4146" /><Channel p="1080,1150 1185,1170" w={4} c="#3b4146" />
    <Seg p="830,1278 1010,1238" s="#999" w={1.500} />
    <Channel p="740,1262 900,1228" w={3} c="#525a5f" /><Channel p="740,1248 880,1218" w={3} c="#3c4347" />
    <Poly p="590,1270 640,1262 720,1285 830,1280 680,1312" f="#060606" /><Clutter a={[30, 600, 1268, 180, 25, 12]} c="#444" />
    <Poly p="235,1095 255,1072 375,1068 395,1082 388,1170 330,1150 245,1108" f="#0b0b0b" />
    <Clutter a={[40, 250, 1075, 120, 45, 55]} c="#3a3a3a" />
    <Disc x={1250} y={1158} r={11} k={2.500} f="#0b0b0b" /><Clutter a={[45, 1195, 1132, 100, 50, 77]} c="#333" />

    {/* left translucent plate */}
    <Poly p="403,308 440,278 560,300 700,1000 680,1130 495,1105 403,1060" f="url(#leftPlate)" w={1.400} />
    <Poly p="560,860 620,890 660,1000 560,980" f="#33383c" /><Poly p="560,1000 650,1010 690,1090 560,1080" f="#5c1c1e" />
    <Poly p="560,810 600,815 610,880 560,890" f="#888" />
    <Seg p="560,1010 640,1018" s="#777" w={2} /><Seg p="560,895 640,930" s="#111" w={5} />
    <Rod p="490,590 410,820" w={6} c="#444" /><Rod p="505,610 440,850" w={4} c="#555" />

    {/* back plate and centre */}
    <Poly p="500,215 740,150 840,440 980,800 1000,1100 760,1130" f="url(#backPlate)" s="none" />
    <Poly p="525,196 728,152 728,166 528,212" f="#fff" />
    <Poly p="750,540 835,500 920,800 900,960 740,960 735,690" f="#747474" /><Poly p="835,590 870,640 905,760 890,900 825,860" f="#565c61" />
    <Seg p="742,570 730,700 760,790" w={2} /><Seg p="752,560 752,790" w={4} /><Seg p="752,560 752,790" w={1.500} s="#777" /><Seg p="765,560 768,790" w={2.500} /><Seg p="832,540 822,860" w={2} /><Seg p="765,670 830,800" w={1.200} /><Seg p="850,620 865,860" w={1} />
    <Poly p="690,790 735,785 740,810 695,818" f="#ddd" s="none" />
    {[0, 1, 2, 3].map(i => <Roller key={i} x={603 + i * 36} y={441 - i * 8} h={58} w={30} />)}
    <Poly p="750,425 765,412 800,432 830,470 820,500 760,470" f="#777" /><Disc x={763} y={440} r={8} k={0.700} f="#222" /><Disc x={763} y={440} r={4} k={0.700} f="#777" />
    {[0, 1, 2, 3, 4, 5].map(i => <Roller key={i} x={610 + i * 36} y={505 - i * 8} h={75} w={30} />)}
    {[0, 1, 2].map(i => <Roller key={i} x={678 + i * 22} y={732 - i * 5} h={52} w={16} />)}
    <Rod p="680,718 815,693" w={6} c="#999" />
    <Poly p="745,785 765,770 775,740 785,770 805,780 790,800 745,805" f="#0a0a0a" />

    {/* right translucent plate */}
    <Poly p="840,100 900,86 912,150 1180,1058 1140,1092 1000,1080 985,800 840,190" f="url(#rightPlate)" w={1.200} />
    <Seg p="900,86 912,150 1180,1058" w={2.600} /><Seg p="835,150 905,133" /><Seg p="838,188 912,168" /><Seg p="838,188 900,140" w={1.300} />
    <Poly p="1120,990 1160,985 1180,1058 1140,1085" f="#7a2a2c" s="none" opacity="0.700" />

    {/* towers */}
    <Poly p="410,165 470,110 545,180 590,430 690,790 775,1130 700,1160 560,670 490,440" f="#161718" />
    <Channel p="425,185 568,640 705,1130" w={9} c="#3a3b3c" d="2.200 2.400" />
    <Channel p="458,190 600,640 722,1090" w={6} c="#525354" d="2 2.400" />
    <Seg p="490,250 622,690 740,1090" s="#050505" w={4} />
    <Channel p="482,245 615,690 735,1080" w={3} c="#333" />
    <Channel p="515,222 590,500 660,740 735,1040" w={6} c="#999" d="2 2.400" />
    <Poly p="725,160 830,130 860,190 1060,1000 980,1060 960,900 905,740" f="#161718" />
    <Channel p="742,165 902,680 960,870" w={10} c="#484949" d="2.200 2.400" />
    <Channel p="780,158 942,690 1005,980" w={7} c="#707172" d="2 2.400" />
    <Seg p="805,158 960,690 1020,960" s="#060606" w={4} />
    <Channel p="825,155 975,690 1050,990" w={7} c="#868686" d="2 2.400" />

    {/* left column, drive box and wheels */}
    <Poly p="490,455 520,440 560,560 575,680 550,690 497,690" f="#33373a" />
    <Channel p="505,470 535,670" w={6} c="#33373a" /><Channel p="520,470 553,670" w={5} c="#2b2f32" /><Channel p="508,610 508,680" w={8} c="#2c3033" />
    <Poly p="497,680 555,690 553,1115 525,1190 490,1200 497,1000" f="#2b2f33" /><Seg p="527,690 527,1110" s="#3d4347" w={1.200} />
    <Poly p="465,715 480,692 525,695 537,712 537,840 515,850 467,820" f="#26282a" w={1.800} /><Poly p="473,722 515,722 520,838 475,815" f="#33373a" />
    <Disc x={487} y={770} r={7} f="#1a1c1d" k={0.700} w={1.500} /><Disc x={487} y={797} r={8} f="#1a1c1d" k={0.700} w={1.500} /><Seg p="475,708 497,712" s="#888" />
    <Disc x={460} y={510} r={15} f="#141414" /><Poly p="455,478 485,475 492,545 455,555" f="#333" /><Disc x={445} y={513} r={12} k={0.900} f="#0a0a0a" />
    <Disc x={425} y={513} r={9} k={0.700} f="#0c0c0c" /><Disc x={447} y={513} r={4} f="#333" />
    <Rod p="435,353 465,350" w={7} c="#222" /><Rod p="560,438 582,405" w={7} /><Rod p="645,775 685,735" w={7} />
    <Disc x={395} y={815} r={7} f="#080808" /><Seg p="390,812 440,855" w={9} s="#0a0a0a" /><Disc x={465} y={860} r={10} f="#0a0a0a" /><Rod p="405,815 430,850" w={5} c="#444" />
    <Poly p="405,890 478,905 465,1018 420,985" f="#1d1d1d" /><Disc x={440} y={963} r={13} f="#101010" /><Disc x={442} y={963} r={6} f="#555" />
    <Rod p="485,970 513,968" w={7} c="#444" /><Rod p="575,842 600,842" w={8} c="#333" />
    <Poly p="500,1110 535,1125 555,1180 550,1240 470,1210" f="#24282b" /><Channel p="540,1130 540,1195" w={8} c="#343a3e" />
    <Seg p="568,1040 560,1080 570,1090" w={2.500} />

    {/* top cross bar */}
    <Poly p="412,165 440,125 470,97 545,83 550,190 475,232" f="#1d2022" />
    <Channel p="470,110 550,95" w={6} c="#4a5157" /><Channel p="455,140 470,225" w={7} c="#555" />
    <Disc x={505} y={180} r={7} f="#0b0b0b" k={0.600} /><Clutter a={[30, 440, 130, 80, 50, 33]} c="#444" />
    <Channel p="700,58 757,42" w={8} c="#34393d" />
    <Seg p="560,90 700,60" w={10} s="#15171a" />
    <Disc x={565} y={85} r={6} k={0.800} /><Disc x={580} y={82} r={6} k={0.800} /><Poly p="605,55 650,48 655,80 612,85" f="#666" /><Disc x={607} y={65} r={9} k={0.700} /><Disc x={645} y={58} r={9} k={0.700} /><Disc x={672} y={58} r={6} k={0.700} /><Disc x={687} y={60} r={6} k={0.700} />
    <Poly p="535,118 840,47 858,100 858,125 545,192" f="#16181a" />
    <Poly p="535,118 835,48 848,104 545,174" f="url(#beam)" />
    <Poly p="820,52 835,48 850,60 856,112 845,118" f="#25282b" />
    <Poly p="605,96 655,88 666,154 616,160" f="#e8e8e8" w={1.600} /><Poly p="724,70 775,62 788,124 738,132" f="#e8e8e8" w={1.600} />
    {[[617, 107], [648, 102], [623, 147], [655, 142], [635, 125], [632, 105], [738, 80], [768, 76], [745, 120], [778, 115], [757, 98], [752, 78]].map(([x, y]) => <Disc key={x} x={x} y={y} r={2.400} w={0} />)}
    {[[550, 128], [552, 145], [556, 160], [825, 66], [829, 80], [833, 97]].map(([x, y]) => <Disc key={x} x={x} y={y} r={1.200} w={0} />)}

    {/* carriage */}
    <Poly p="735,840 910,800 965,1000 960,1040 790,1050" f="#3b3b3b" />
    <Poly p="830,905 905,838 960,1000 935,1065 800,990 830,970" f="#7b7b7b" />
    {[[890, 868], [900, 890], [905, 925], [915, 935], [935, 1000], [940, 1040]].map(([x, y]) => <Seg key={x} p={`${x},${y} ${x + 22},${y - 14}`} w={1.600} strokeDasharray="2 2" />)}
    <Seg p="765,870 905,945" s="#999" w={4} /><Seg p="765,870 905,945" s="#222" w={2} /><Channel p="780,900 910,950" w={4} c="#666" />
    <Channel p="750,860 890,830" w={5} c="#222" hole="#666" />
    <Channel p="700,832 930,785" w={6} c="#999" /><Channel p="732,840 795,1060" w={7} c="#9a9a9a" d="2 3" />
    <Channel p="925,790 980,1040" w={7} c="#999" d="2 3" /><Seg p="742,865 732,835 760,832" s="#ddd" w={3} /><Seg p="905,798 925,792 938,850" s="#ccc" w={3} />
    <Disc x={807} y={805} r={6} k={1} f="#ddd" s="#333" w={1.600} /><Disc x={810} y={805} r={3} f="#555" /><Disc x={855} y={795} r={6} f="#ccc" s="#222" w={1.600} /><Disc x={856} y={795} r={3} f="#444" />
    <Clutter a={[70, 740, 930, 200, 150, 131]} c="#0c0c0c" w={1.600} /><Clutter a={[50, 750, 1010, 190, 90, 17]} c="#999" w={0.900} />
    <Disc x={875} y={1002} r={10} f="#888" w={1.600} /><Disc x={875} y={1002} r={6} f="#080808" />
    <Disc x={1075} y={950} r={22} k={0.650} f="#0a0a0a" /><Poly p="1050,915 1075,895 1105,930 1128,1060 1095,1070 1050,990" f="#555" w={1.500} />
    <Rod p="740,1003 1070,930" w={6} c="#7a7a7a" />
    <Disc x={742} y={998} r={9} k={0.700} f="#666" w={1.500} /><Disc x={742} y={998} r={4} f="#111" k={0.700} /><Disc x={1028} y={935} r={11} k={0.500} f="#666" w={1.800} /><Disc x={1068} y={928} r={7} f="#777" k={0.700} w={1.500} /><Disc x={1068} y={928} r={3} f="#333" k={0.700} />

    {/* motors and wheels */}
    <Poly p="760,1055 815,1045 820,1125 765,1130" f="#222" /><Clutter a={[40, 755, 1055, 50, 70, 63]} c="#bbb" />
    <Poly p="805,1047 855,1038 865,1105 815,1125" f="#999" /><Poly p="827,1045 842,1043 844,1068 830,1072" f="#111" />
    <Poly p="985,1010 1045,995 1058,1065 990,1080" f="#8b8b8b" /><Disc x={983} y={1043} r={12} k={0.650} f="#777" w={1.600} /><Disc x={983} y={1043} r={7} k={0.600} f="#111" /><Poly p="1015,1020 1028,1018 1030,1045 1018,1048" f="#0a0a0a" />
    <Poly p="1050,1000 1110,985 1118,1060 1060,1075" f="#161616" /><Clutter a={[40, 1050, 1000, 45, 60, 47]} c="#999" />
    <Disc x={883} y={1070} r={7} f="#bbb" w={1.500} /><Disc x={883} y={1070} r={3} f="#333" /><Disc x={932} y={1062} r={7} f="#bbb" w={1.500} /><Disc x={932} y={1062} r={3} f="#333" />
    <Seg p="725,990 755,1130" s="#060606" w={7} />
    <Disc x={692} y={1008} r={15} k={0.650} f="#4b4a44" w={2.800} /><Disc x={690} y={1008} r={5} k={0.700} f="#111" />
    <Disc x={720} y={1103} r={15} k={0.700} f="#55534b" w={2.800} /><Disc x={716} y={1105} r={5} k={0.700} f="#111" />

    {/* front cross beam */}
    <Poly p="555,1232 1283,1072 1288,1120 1240,1128 1180,1120 560,1258" f="#1d2124" />
    <Poly p="553,1208 1272,1050 1283,1074 558,1236" f="#6a7279" />
    <Seg p="562,1222 1275,1063" s="#0c0d0e" w={3} strokeDasharray="2 2.800" />
    <Seg p="556,1207 1272,1050" s="#8b949b" w={0.800} />
    <Poly p="525,1215 545,1205 560,1235 560,1262 540,1255" f="#23272a" />
    <Rod p="835,1160 885,1105" w={6} c="#222" /><Rod p="1000,1125 1050,1080" w={6} c="#222" />
    <Rod p="880,378 920,328" w={8} c="#2d2d2d" /><Rod p="975,708 1020,655" w={8} c="#2d2d2d" /><Disc x={1000} y={753} r={4} />
    <Disc x={707} y={1251} r={3.600} f="#222" s="#fff" w={2.400} />
  </Svg>
);

/* ---------- data ---------- */

const TOOL_GROUPS = [
  [['clock', 'Mate connector']],
  [['fastened', 'Fastened mate'], ['revolute', 'Revolute mate'], ['slider', 'Slider mate'], ['planar', 'Planar mate'], ['cylindrical', 'Cylindrical mate'], ['pinslot', 'Pin slot mate'], ['ball', 'Ball mate'], ['parallel', 'Parallel mate']],
  [['tangent', 'Tangent mate']],
  [['group', 'Group'], ['replicate', 'Replicate'], ['select', 'Select'], ['pattern', 'Linear pattern'], ['mirror', 'Mirror'], ['block', 'Block pattern'], ['circular', 'Circular pattern']],
  [['gearpair', 'Gear relation'], ['rack', 'Rack and pinion relation'], ['screw', 'Screw relation'], ['linear', 'Linear relation']],
  [['bom', 'Display states'], ['variable', 'Create part']],
];

const INSTANCES = [
  ...['Part 7 <...', 'Part 4 <...', 'Part 2 <...', 'Part 7 <...', 'Part 6 <...', 'Part 6 <...', 'Part 6 <...', 'Part 1 <...', 'Part 2 <...'],
  ...Array(7).fill('ROUND ...'),
  'Part 1 <...',
  'FRC ...',
  ...Array(6).fill('REV-...'),
];

const SIDE = [['props', 'Properties'], ['configs', 'Configurations'], ['derived', 'Derived'], ['named', 'Named positions'], ['vars', 'Variables']];

export default function App() {
  return (
    <>
      <GlobalStyle />
      <Page>
        <Header>
          <Logo />
          <Wordmark>onshape</Wordmark>
          <MenuButton aria-label="Menu"><span /><span /><span /></MenuButton>
          <Title>Practice 8177 robot</Title>
          <Branch>Main</Branch>
          <HeaderLink $after={38} aria-label="Copy link"><Icon name="link" size={20} /></HeaderLink>
          <HeaderLink aria-label="Learning"><Icon name="cap" size={22} /></HeaderLink>
          <Account>
            <HeaderTool aria-label="Release management"><Icon name="braces" /></HeaderTool>
            <HeaderTool aria-label="Notifications"><Icon name="bell" size={24} /><Badge>5</Badge></HeaderTool>
            <HeaderTool aria-label="Tasks"><Icon name="checklist" size={22} /></HeaderTool>
            <HeaderTool aria-label="App store"><Icon name="apps" /></HeaderTool>
            <HeaderTool aria-label="Learning center"><Icon name="head" size={22} /></HeaderTool>
            <ShareButton>Share</ShareButton>
            <MenuTrigger aria-label="Help"><Icon name="help" /><Caret /></MenuTrigger>
            <MenuTrigger><Avatar />Jake Sakamoto<Caret w={8} h={5} /></MenuTrigger>
          </Account>
        </Header>

        <Rail>
          <RailButton aria-label="Versions"><Icon name="tree" /></RailButton>
          <RailButton aria-label="Add mate"><Icon name="addmate" size={22} /></RailButton>
          <RailButton aria-label="Comments"><Icon name="comment" /></RailButton>
          <RailButton aria-label="History"><Icon name="timer" size={22} /></RailButton>
          <RailButton $divided aria-label="Task list"><Icon name="checklist" size={23} /></RailButton>
          <RailButton $bottom aria-label="Search tabs"><Icon name="search" size={23} /></RailButton>
        </Rail>

        <Workspace>
          <Toolbar>
            <Tool aria-label="Undo"><Icon name="undo" /></Tool>
            <Tool aria-label="Redo"><Icon name="redo" /></Tool>
            <Divider />
            <Tool aria-label="Refresh"><Icon name="refresh" /></Tool>
            <Divider />
            <Tool $wide={95}><Icon name="insert" size={20} />Insert</Tool>
            {TOOL_GROUPS.map((tools, i) => (
              <React.Fragment key={i}>
                <Divider />
                {tools.map(([icon, label]) => <Tool key={icon} aria-label={label}><Icon name={icon} size={23} /></Tool>)}
              </React.Fragment>
            ))}
            <SearchTools>Search tools...<Key $gap={5}>alt/⌥</Key><Key $pad={5}>c</Key></SearchTools>
          </Toolbar>

          <Panel>
            <FilterRow>
              <button aria-label="Filter"><Icon name="funnel" /></button>
              <FilterInput aria-label="Filter by name" placeholder="Filter by name" />
              <button aria-label="List view"><Icon name="list" size={18} /></button>
            </FilterRow>
            <SectionHead>
              <SectionTitle>Instances (624)</SectionTitle>
              <button aria-label="New folder"><Icon name="folder" size={22} /></button>
            </SectionHead>
            <ListArea>
              <List>
                {INSTANCES.map((name, i) => {
                  const dot = i > 16;
                  return (
                    <Row key={i}>
                      <Icon name="part" size={20} />
                      <RowName $short={dot}>{name}</RowName>
                      {dot ? <MateDot /> : <MateArrow />}
                    </Row>
                  );
                })}
              </List>
              <Scrollbar><Caret up /><Thumb /><Caret /></Scrollbar>
            </ListArea>
          </Panel>

          <Canvas>
            <Robot />
            <PanelToggle aria-label="Toggle list"><Icon name="outline" size={22} /></PanelToggle>
            <CubeArea>
              <ViewCube />
              <ShadeButton aria-label="Display mode">
                <Svg $w={22} viewBox="0 0 22 22">
                  <path d="M11 1l10 3v13l-10 4-10-4V4z" fill="#fff" />
                  <path d="M11 7l10-3v13l-10 4z" fill="#bbb" />
                  <path d="M1 4l10 3v14L1 17z" fill="#ddd" />
                  <path d="M11 1l10 3v13l-10 4-10-4V4z" fill="none" stroke="#333" strokeWidth="1.300" />
                </Svg>
                <Caret w={8} h={4} />
              </ShadeButton>
            </CubeArea>
            <SideTabs>
              <SideGroup>
                {SIDE.map(([icon, label], i) => <SideButton key={icon} $tall={i > 0 && i < 4} aria-label={label}><Icon name={icon} size={23} /></SideButton>)}
              </SideGroup>
              <SideGroup>
                <SideButton aria-label="MK app">
                  <Svg $w={26} viewBox="0 0 26 26">
                    <rect x="-1" y="-1" width="30" height="28" rx="3" fill="#ccc" />
                    <rect x="2" y="2" width="23" height="22" fill="#1a66d6" stroke="#111" strokeWidth="1.500" />
                    <text x="13" y="19" textAnchor="middle" fontFamily='"Liberation Serif", serif' fontWeight="700" fontSize="14" fill="#fff">MK</text>
                  </Svg>
                </SideButton>
              </SideGroup>
            </SideTabs>
            <MeasureBar>
              <button aria-label="Measure"><Icon name="tape" size={22} /></button>
              <button aria-label="Angle"><Icon name="protractor" size={23} /></button>
              <button aria-label="Mass properties"><Icon name="scales" size={19} /></button>
            </MeasureBar>
          </Canvas>

          <TabBar><button aria-label="Add tab"><Icon name="add" size={22} /></button></TabBar>
        </Workspace>
      </Page>
    </>
  );
}
